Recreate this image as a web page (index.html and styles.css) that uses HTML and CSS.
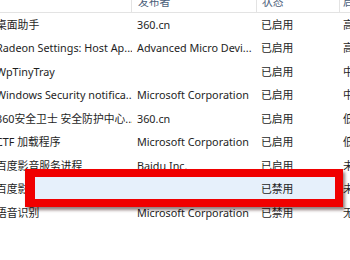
FILE: index.html
```html
<!DOCTYPE html>
<html lang="zh-CN">
<head>
<meta charset="utf-8">
<title>启动</title>
<link rel="stylesheet" href="styles.css">
</head>
<body>
<div class="window">
  <div class="header">
    <div class="hcell c1"><span class="htext"></span></div>
    <div class="hcell c2"><span class="htext">发布者</span></div>
    <div class="hcell c3"><span class="htext">状态</span></div>
    <div class="hcell c4"><span class="htext">启动影响</span></div>
  </div>
  <div class="rows">
    <div class="row"><span class="c1">桌面助手</span><span class="c2">360.cn</span><span class="c3">已启用</span><span class="c4">高</span></div>
    <div class="row"><span class="c1">Radeon Settings: Host Ap...</span><span class="c2">Advanced Micro Devi...</span><span class="c3">已启用</span><span class="c4">高</span></div>
    <div class="row"><span class="c1">WpTinyTray</span><span class="c2"></span><span class="c3">已启用</span><span class="c4">中</span></div>
    <div class="row"><span class="c1">Windows Security notifica...</span><span class="c2">Microsoft Corporation</span><span class="c3">已启用</span><span class="c4">中</span></div>
    <div class="row"><span class="c1">360安全卫士 安全防护中心...</span><span class="c2">360.cn</span><span class="c3">已启用</span><span class="c4">低</span></div>
    <div class="row"><span class="c1">CTF 加载程序</span><span class="c2">Microsoft Corporation</span><span class="c3">已启用</span><span class="c4">低</span></div>
    <div class="row"><span class="c1">百度影音服务进程</span><span class="c2">Baidu Inc.</span><span class="c3">已启用</span><span class="c4">未计量</span></div>
    <div class="row sel"><span class="c1">百度影音</span><span class="c2">Baidu Inc.</span><span class="c3">已禁用</span><span class="c4">未计量</span></div>
    <div class="row"><span class="c1">语音识别</span><span class="c2">Microsoft Corporation</span><span class="c3">已禁用</span><span class="c4">无</span></div>
  </div>
  <div class="annot"></div>
</div>
</body>
</html>
```
FILE: styles.css
```css
html, body {
  margin: 0;
  padding: 0;
  background: #ffffff;
  overflow: hidden;
}
.window {
  position: relative;
  width: 350px;
  height: 260px;
  overflow: hidden;
  font-family: "Noto Sans", "Noto Sans CJK SC", sans-serif;
  font-size: 10.8px;
  color: #1e1e1e;
}
.header, .row {
  display: grid;
  grid-template-columns: 136px 125px 83px 1fr;
  margin-left: -4px;
}
.header {
  height: 12px;
  border-bottom: 1px solid #e3e3e3;
  overflow: hidden;
}
.hcell {
  height: 12px;
  overflow: hidden;
  border-right: 1px solid #e3e3e3;
  color: #4c607a;
}
.hcell.c4 { border-right: none; }
.htext {
  display: block;
  line-height: 12px;
  margin-top: -4px;
  white-space: nowrap;
}
.hcell.c2 { padding-left: 6px; }
.hcell.c3 { padding-left: 5px; }
.hcell.c4 { padding-left: 3px; }
.row {
  height: 23.44px;
  line-height: 23.44px;
  white-space: nowrap;
}
.row span { overflow: hidden; }
.row .c2 { padding-left: 5px; }
.row .c3 { padding-left: 4px; }
.row .c4 { padding-left: 3px; }
.row.sel .c3 { background: #e6f0fb; }
.annot {
  position: absolute;
  left: 25px;
  top: 169px;
  width: 300px;
  height: 22px;
  border: 8px solid #f00000;
  border-left-width: 10px;
  background: linear-gradient(to right, #e6f0fb 0, #e6f0fb 222px, transparent 222px);
  box-shadow: 2px 3px 3px rgba(40, 0, 0, 0.5);
}
```
